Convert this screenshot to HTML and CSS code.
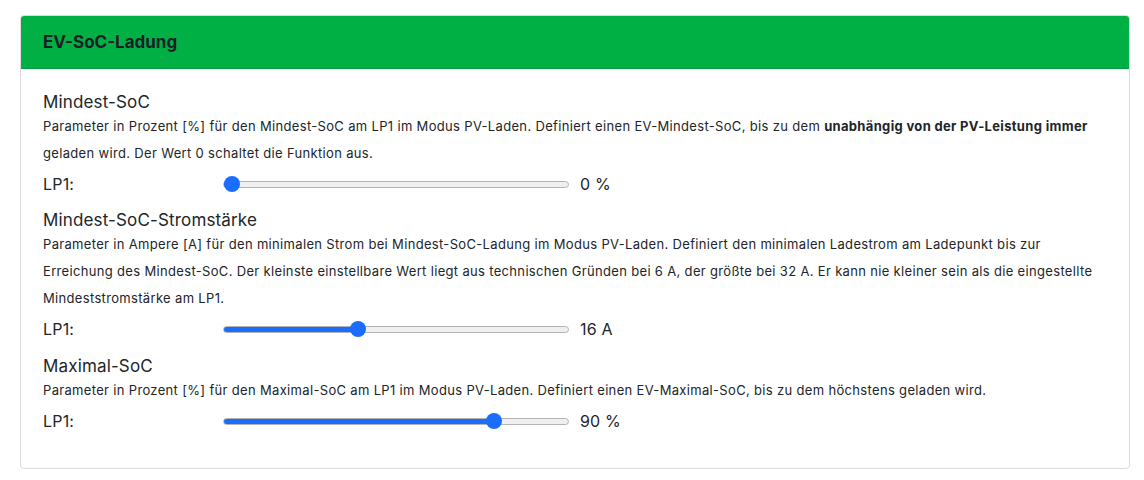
FILE: index.html
```html
<!DOCTYPE html>
<html lang="de">
<head>
<meta charset="utf-8">
<title>EV-SoC-Ladung</title>
<link rel="stylesheet" href="styles.css">
</head>
<body>
<div class="page">
  <section class="card">
    <header class="card-header">EV-SoC-Ladung</header>
    <div class="card-body">
      <div class="setting">
        <h3 class="setting-title">Mindest-SoC</h3>
        <p class="setting-desc">Parameter in Prozent [%] für den Mindest-SoC am LP1 im Modus PV-Laden. Definiert einen EV-Mindest-SoC, bis zu dem <b>unabhängig von der PV-Leistung immer</b> geladen wird. Der Wert 0 schaltet die Funktion aus.</p>
        <div class="setting-row">
          <label class="row-label">LP1:</label>
          <input class="range" type="range" min="0" max="100" value="0" style="--fill: 2.3%">
          <span class="row-value">0 %</span>
        </div>
      </div>
      <div class="setting">
        <h3 class="setting-title">Mindest-SoC-Stromstärke</h3>
        <p class="setting-desc">Parameter in Ampere [A] für den minimalen Strom bei Mindest-SoC-Ladung im Modus PV-Laden. Definiert den minimalen Ladestrom am Ladepunkt bis zur Erreichung des Mindest-SoC. Der kleinste einstellbare Wert liegt aus technischen Gründen bei 6 A, der größte bei 32 A. Er kann nie kleiner sein als die eingestellte Mindeststromstärke am LP1.</p>
        <div class="setting-row">
          <label class="row-label">LP1:</label>
          <input class="range" type="range" min="6" max="32" value="16" style="--fill: 39%">
          <span class="row-value">16 A</span>
        </div>
      </div>
      <div class="setting">
        <h3 class="setting-title">Maximal-SoC</h3>
        <p class="setting-desc">Parameter in Prozent [%] für den Maximal-SoC am LP1 im Modus PV-Laden. Definiert einen EV-Maximal-SoC, bis zu dem höchstens geladen wird.</p>
        <div class="setting-row">
          <label class="row-label">LP1:</label>
          <input class="range" type="range" min="50" max="100" value="90" style="--fill: 78.6%">
          <span class="row-value">90 %</span>
        </div>
      </div>
    </div>
  </section>
</div>
</body>
</html>
```

FILE: styles.css
```css
* { box-sizing: border-box; }
html, body { margin: 0; padding: 0; background: #fff; }
body {
  font-family: Inter, "Liberation Sans", Arial, sans-serif;
  color: #212529;
}
.page {
  padding: 15px 0 0 20px;
}
.card {
  width: 1110px;
  border: 1px solid #dcdcdc;
  border-radius: 4px;
  overflow: hidden;
}
.card-header {
  height: 53px;
  background: #00b045;
  border-bottom: 1px solid #009a3c;
  display: flex;
  align-items: center;
  padding: 0 22px;
  font-size: 17px;
  font-weight: 700;
  color: #1c2025;
}
.card-body {
  padding: 22px 22px 22px 22px;
}
.setting-title {
  margin: 0;
  font-size: 17px;
  font-weight: 400;
  line-height: 22px;
  letter-spacing: 0.15px;
}
.setting-desc {
  margin: 0;
  font-size: 13px;
  line-height: 27px;
  letter-spacing: 0.33px;
}
.setting-desc b { font-weight: 700; }
.setting-row {
  display: flex;
  align-items: center;
  height: 34px;
  margin-bottom: 8px;
}
.setting:first-child .setting-row { margin-bottom: 8px; }
.setting:last-child { padding-top: 1px; }
.row-label {
  width: 180px;
  font-size: 16px;
  letter-spacing: 0.2px;
}
.range {
  -webkit-appearance: none;
  appearance: none;
  width: 346px;
  height: 16px;
  margin: 0;
  background: transparent;
}
.range::-webkit-slider-runnable-track {
  height: 7px;
  border-radius: 4px;
  border: 1px solid #b3b3b3;
  background: linear-gradient(to right, #1a6dff 0, #1a6dff var(--fill), #efefef var(--fill), #efefef 100%);
}
.range::-webkit-slider-thumb {
  -webkit-appearance: none;
  appearance: none;
  width: 16px;
  height: 16px;
  border-radius: 50%;
  background: #1a6dff;
  border: none;
  margin-top: -5.5px;
}
.row-value {
  margin-left: 11px;
  font-size: 16px;
  letter-spacing: 0.2px;
}
```
